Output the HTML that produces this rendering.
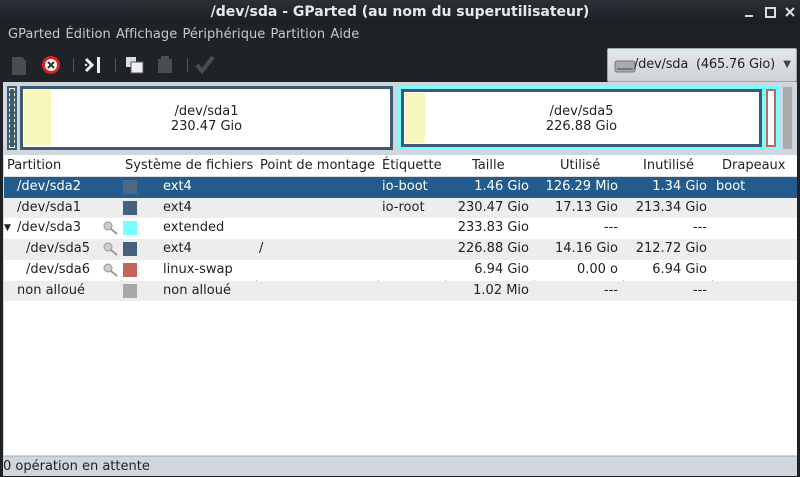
<!DOCTYPE html>
<html><head><meta charset="utf-8"><style>
*{margin:0;padding:0;box-sizing:border-box}
body{width:800px;height:476px;overflow:hidden;background:#1e2226;font-family:"DejaVu Sans","Liberation Sans",sans-serif;font-size:13px;position:relative}
.abs{position:absolute}
#title{left:0;top:0;width:800px;height:24px;background:linear-gradient(#2a3036,#1b1f23);color:#e8e8e8;font-weight:bold;font-size:14px;text-align:center;line-height:24px}
#menu{left:0;top:24px;width:800px;height:22px;background:#1f2327;color:#c8c8c8;line-height:22px;padding-left:8px;font-size:13px;word-spacing:1px;letter-spacing:0.05px}
#tb{left:0;top:46px;width:800px;height:37px;background:#1f2327}
#combo{left:607px;top:48px;width:190px;height:34px;background:linear-gradient(#e4e7ea,#cdd2d6);border:1px solid #9aa;border-radius:2px;color:#222;line-height:32px;font-size:13px}
#main{left:3px;top:82px;width:794px;height:392px;background:#cfd6dc}
.map{top:86px;height:64px}
#table{left:4px;top:155px;width:793px;height:300px;background:#fff}
.hdr{top:0;height:22px;line-height:21px;color:#222;background:#fff;border-bottom:1px solid #ddd}
.row{left:0;width:793px;height:20.7px;line-height:20px;color:#222}
.c{position:absolute;white-space:nowrap}
.r{text-align:right}
.sw{position:absolute;top:3px;width:14px;height:14px}
.key{position:absolute;left:99px;top:3px}
#status{left:3px;top:456px;width:794px;height:20px;background:#cfd6dc;color:#222;line-height:20px;font-size:13px;border-top:1px solid #b8c0c6}
.vl{position:absolute;top:22px;height:124px;border-left:1px dotted #bbb}
</style></head><body>
<div id="title" class="abs">/dev/sda - GParted (au nom du superutilisateur)</div>
<svg class="abs" style="left:740px;top:4px" width="56" height="16"><rect x="5" y="11" width="8" height="2" fill="#ddd"/><rect x="26" y="4" width="9" height="9" fill="none" stroke="#ddd" stroke-width="2"/><path d="M46 4l8 8M54 4l-8 8" stroke="#ddd" stroke-width="2"/></svg>
<div id="menu" class="abs">GParted Édition Affichage Périphérique Partition Aide</div>
<div id="tb" class="abs">
<svg width="240" height="37" style="position:absolute;left:0;top:0">
<path d="M12 11h10l4 4v14h-14z" fill="#4a4e52"/>
<circle cx="51" cy="19" r="9" fill="#d22"/><circle cx="51" cy="19" r="6" fill="#fff"/><path d="M48 16l6 6M54 16l-6 6" stroke="#333" stroke-width="2"/>
<rect x="73" y="12" width="1" height="14" fill="#555"/>
<path d="M86 13l6 6-6 6" stroke="#eee" stroke-width="3" fill="none"/><rect x="97" y="11" width="3" height="16" fill="#eee"/><circle cx="86" cy="19" r="1.2" fill="#eee"/>
<rect x="115" y="12" width="1" height="14" fill="#555"/>
<rect x="126" y="11" width="10" height="10" fill="#ddd"/><rect x="131" y="16" width="12" height="11" fill="#eee" stroke="#555"/>
<rect x="158" y="13" width="14" height="14" fill="#4a4e52"/><rect x="161" y="10" width="8" height="4" fill="#4a4e52"/>
<rect x="187" y="12" width="1" height="14" fill="#555"/>
<path d="M197 19l5 6 11-14" stroke="#4a4e52" stroke-width="4" fill="none"/>
</svg></div>
<div id="combo" class="abs"><svg width="22" height="16" style="position:absolute;left:6px;top:9px"><rect x="1" y="3" width="20" height="11" rx="2" fill="#aaa" stroke="#777"/><rect x="3" y="10" width="16" height="2" fill="#777"/></svg><span style="position:absolute;left:26px;letter-spacing:-0.2px">/dev/sda&nbsp; (465.76 Gio)</span><span style="position:absolute;right:5px;font-size:10px;color:#444">▼</span></div>
<div id="main" class="abs"></div>
<div class="abs map" style="left:7px;width:10px;background:#3d5a75;padding:2px"><div style="width:6px;height:60px;border:1px dashed #f5f5b0;background:#3d5a75"></div></div>
<div class="abs map" style="left:20px;width:373px;border:3px solid #3d5a75;background:#fff"><div style="position:absolute;left:1px;top:1px;width:27px;height:56px;background:#f7f7bd"></div><div style="position:absolute;left:0;right:0;top:15px;text-align:center;line-height:15px;color:#222">/dev/sda1<br>230.47 Gio</div></div>
<div class="abs map" style="left:398px;width:381px;background:#7ff"></div>
<div class="abs" style="left:401px;top:89px;width:361px;height:58px;border:3px solid #3d5a75;background:#fff"><div style="position:absolute;left:1px;top:1px;width:20px;height:50px;background:#f7f7bd"></div><div style="position:absolute;left:0;right:0;top:12px;text-align:center;line-height:15px;color:#222">/dev/sda5<br>226.88 Gio</div></div>
<div class="abs" style="left:766px;top:89px;width:10px;height:58px;border:2px solid #c5655a;background:#fff"></div>
<div class="abs" style="left:783px;top:87px;width:9px;height:62px;background:#aaa"></div>
<div id="table" class="abs">
<div class="abs hdr" style="left:0;width:793px">
<span class="c" style="left:3px">Partition</span><span class="c" style="left:121px">Système de fichiers</span><span class="c" style="left:256px">Point de montage</span><span class="c" style="left:378px">Étiquette</span><span class="c" style="left:468px">Taille</span><span class="c" style="left:556px">Utilisé</span><span class="c" style="left:639px">Inutilisé</span><span class="c" style="left:718px">Drapeaux</span>
</div>
<div class="vl" style="left:117px"></div><div class="vl" style="left:252px"></div><div class="vl" style="left:374px"></div><div class="vl" style="left:441px"></div><div class="vl" style="left:530px"></div><div class="vl" style="left:619px"></div><div class="vl" style="left:708px"></div>
<div class="abs row" style="top:22px;background:#235c8c;color:#fff"><span class="c" style="left:13px">/dev/sda2</span><span class="sw" style="left:119px;background:#4d6883"></span><span class="c" style="left:159px">ext4</span><span class="c" style="left:378px">io-boot</span><span class="c r" style="right:268px">1.46 Gio</span><span class="c r" style="right:179px">126.29 Mio</span><span class="c r" style="right:90px">1.34 Gio</span><span class="c" style="left:712px">boot</span></div>
<div class="abs row" style="top:42.7px;background:#ededed"><span class="c" style="left:13px">/dev/sda1</span><span class="sw" style="left:119px;background:#44617f"></span><span class="c" style="left:159px">ext4</span><span class="c" style="left:378px">io-root</span><span class="c r" style="right:268px">230.47 Gio</span><span class="c r" style="right:179px">17.13 Gio</span><span class="c r" style="right:90px">213.34 Gio</span></div>
<div class="abs row" style="top:63.4px;background:#fff"><span class="c" style="left:0;font-size:9px">▼</span><span class="c" style="left:13px">/dev/sda3</span><svg class="key" width="16" height="14"><circle cx="5" cy="5" r="4" fill="#ccc" stroke="#999"/><path d="M8 8l6 5" stroke="#999" stroke-width="2"/></svg><span class="sw" style="left:119px;background:#7ff"></span><span class="c" style="left:159px">extended</span><span class="c r" style="right:268px">233.83 Gio</span><span class="c r" style="right:179px">---</span><span class="c r" style="right:90px">---</span></div>
<div class="abs row" style="top:84.1px;background:#ededed"><span class="c" style="left:22px">/dev/sda5</span><svg class="key" width="16" height="14"><circle cx="5" cy="5" r="4" fill="#ccc" stroke="#999"/><path d="M8 8l6 5" stroke="#999" stroke-width="2"/></svg><span class="sw" style="left:119px;background:#44617f"></span><span class="c" style="left:159px">ext4</span><span class="c" style="left:255px">/</span><span class="c r" style="right:268px">226.88 Gio</span><span class="c r" style="right:179px">14.16 Gio</span><span class="c r" style="right:90px">212.72 Gio</span></div>
<div class="abs row" style="top:104.8px;background:#fff"><span class="c" style="left:22px">/dev/sda6</span><svg class="key" width="16" height="14"><circle cx="5" cy="5" r="4" fill="#ccc" stroke="#999"/><path d="M8 8l6 5" stroke="#999" stroke-width="2"/></svg><span class="sw" style="left:119px;background:#c5655a"></span><span class="c" style="left:159px">linux-swap</span><span class="c r" style="right:268px">6.94 Gio</span><span class="c r" style="right:179px">0.00 o</span><span class="c r" style="right:90px">6.94 Gio</span></div>
<div class="abs row" style="top:125.5px;background:#ededed"><span class="c" style="left:13px">non alloué</span><span class="sw" style="left:119px;background:#a8a8a8"></span><span class="c" style="left:159px">non alloué</span><span class="c r" style="right:268px">1.02 Mio</span><span class="c r" style="right:179px">---</span><span class="c r" style="right:90px">---</span></div>
</div>
<div id="status" class="abs">0 opération en attente</div>
</body></html>
